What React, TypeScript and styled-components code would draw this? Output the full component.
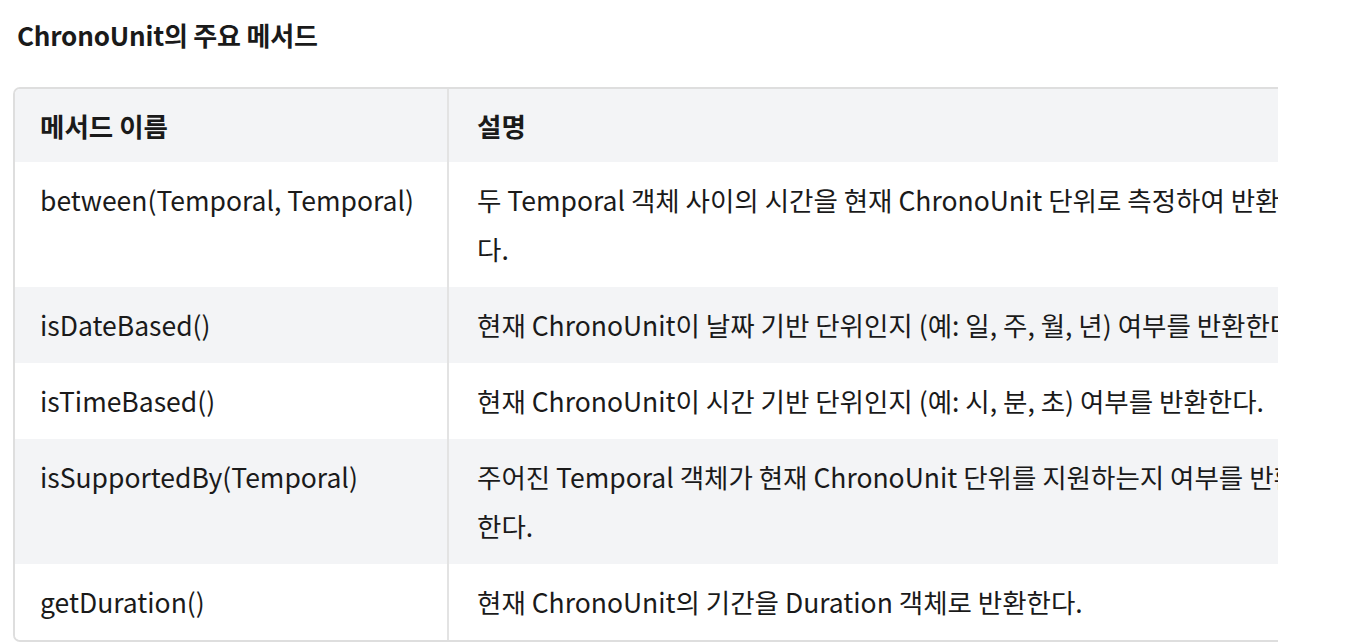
import React from "react";
import styled, { createGlobalStyle } from "styled-components";

const GlobalStyle = createGlobalStyle`
  body {
    margin: 0;
    background: #ffffff;
    color: #1a1a1a;
    font-family: "Noto Sans CJK KR", "Noto Sans", sans-serif;
  }
`;

const Page = styled.div`
  padding: 17px 0 0 13px;
  width: 1265px;
`;

const Title = styled.h3`
  margin: 0 0 34px 4px;
  font-size: 26px;
  font-weight: 700;
  line-height: 36px;
  letter-spacing: -0.2px;
`;

// the table is wider than its box and is cut at the right edge
const Scroller = styled.div`
  width: 1265px;
  overflow: hidden;
`;

const Table = styled.table`
  width: 1326px;
  table-layout: fixed;
  border-collapse: separate;
  border-spacing: 0;
  border: 2px solid #dedede;
  border-radius: 7px;
  overflow: hidden;
  font-size: 26.5px;
  line-height: 49px;
`;

const Row = styled.tr<{ $shaded?: boolean }>`
  background: ${(p) => (p.$shaded ? "#f3f4f6" : "#ffffff")};
`;

const Head = styled.th<{ $first?: boolean }>`
  text-align: left;
  font-weight: 700;
  padding: 12px 28px 12px ${(p) => (p.$first ? "25px" : "28px")};
  border-right: ${(p) => (p.$first ? "2px solid #e3e3e3" : "none")};
`;

const Cell = styled.td<{ $first?: boolean }>`
  vertical-align: top;
  padding: 13px 28px 14px ${(p) => (p.$first ? "25px" : "28px")};
  border-right: ${(p) => (p.$first ? "2px solid #e3e3e3" : "none")};
`;

const methods = [
  {
    name: "between(Temporal, Temporal)",
    desc: "두 Temporal 객체 사이의 시간을 현재 ChronoUnit 단위로 측정하여 반환한다.",
  },
  {
    name: "isDateBased()",
    desc: "현재 ChronoUnit이 날짜 기반 단위인지 (예: 일, 주, 월, 년) 여부를 반환한다.",
  },
  {
    name: "isTimeBased()",
    desc: "현재 ChronoUnit이 시간 기반 단위인지 (예: 시, 분, 초) 여부를 반환한다.",
  },
  {
    name: "isSupportedBy(Temporal)",
    desc: "주어진 Temporal 객체가 현재 ChronoUnit 단위를 지원하는지 여부를 반환한다.",
  },
  {
    name: "getDuration()",
    desc: "현재 ChronoUnit의 기간을 Duration 객체로 반환한다.",
  },
];

const App = (): JSX.Element => {
  return (
    <>
      <GlobalStyle />
      <Page>
        <Title>ChronoUnit의 주요 메서드</Title>
        <Scroller>
          <Table>
            <colgroup>
              <col style={{ width: 434 }} />
              <col />
            </colgroup>
            <thead>
              <Row $shaded>
                <Head $first>메서드 이름</Head>
                <Head>설명</Head>
              </Row>
            </thead>
            <tbody>
              {methods.map((m, i) => (
                <Row key={m.name} $shaded={i % 2 === 1}>
                  <Cell $first>{m.name}</Cell>
                  <Cell>{m.desc}</Cell>
                </Row>
              ))}
            </tbody>
          </Table>
        </Scroller>
      </Page>
    </>
  );
};

export default App;
